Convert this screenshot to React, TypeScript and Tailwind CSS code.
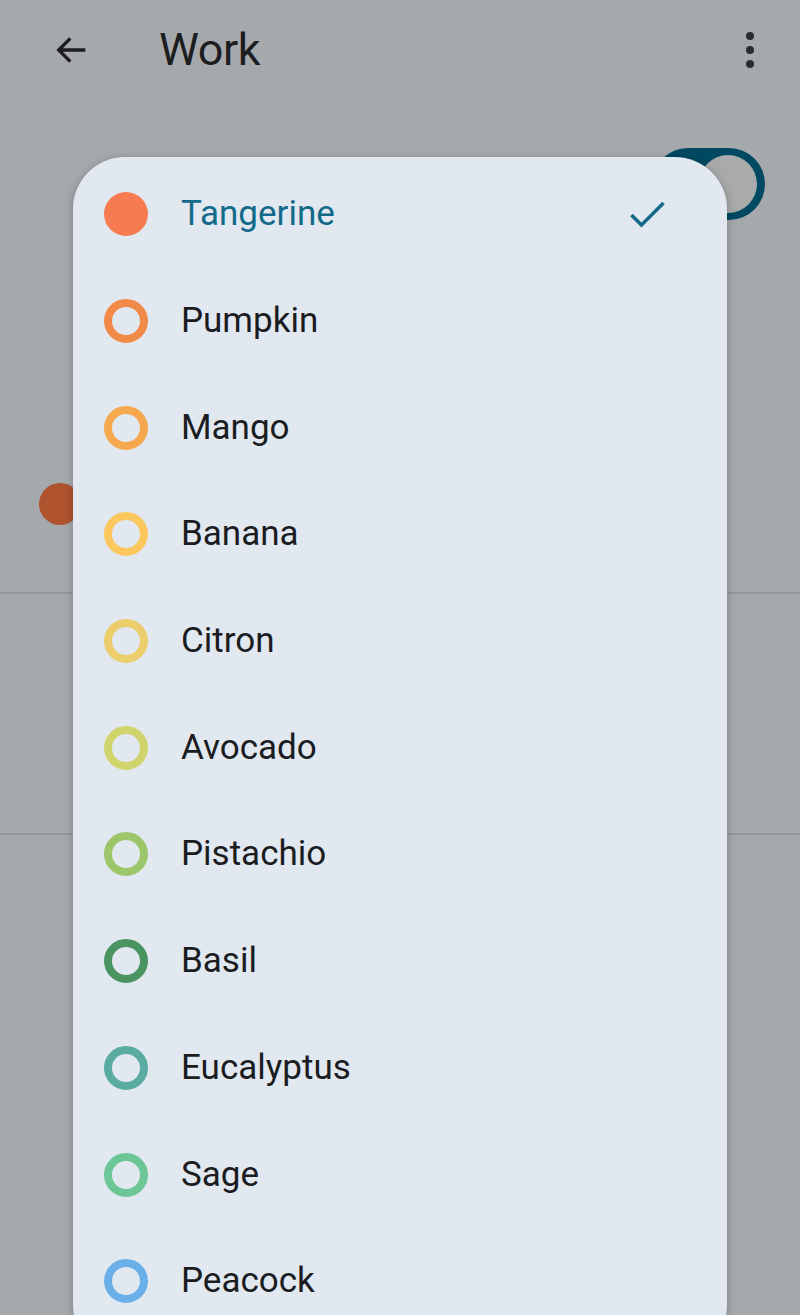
import React from 'react';

const colors = [
  { name: 'Tangerine', color: '#f77b50', selected: true },
  { name: 'Pumpkin', color: '#f28a47' },
  { name: 'Mango', color: '#f6a84e' },
  { name: 'Banana', color: '#fcc85e' },
  { name: 'Citron', color: '#eccd6b' },
  { name: 'Avocado', color: '#d0d46c' },
  { name: 'Pistachio', color: '#9cc66a' },
  { name: 'Basil', color: '#4a9462' },
  { name: 'Eucalyptus', color: '#5aaca2' },
  { name: 'Sage', color: '#6cc695' },
  { name: 'Peacock', color: '#6aafe8' },
];

export default function App() {
  return (
    <div
      className="relative w-[800px] h-[1315px] overflow-hidden bg-[#a6a9ac]"
      style={{ fontFamily: 'Roboto, "Noto Sans", sans-serif' }}
    >
      {/* Top bar */}
      <div className="flex items-center h-[100px] pl-[52px] pr-[46px]">
        <svg width="40" height="40" viewBox="0 0 24 24" className="text-[#1c1c1e]">
          <path d="M20 12H4.5M11 5l-7 7 7 7" fill="none" stroke="currentColor" strokeWidth="2" />
        </svg>
        <span className="ml-[67px] text-[45px] text-[#1c1d1f] tracking-[-0.5px]">Work</span>
        <div className="ml-auto flex flex-col gap-[6px] items-center">
          <span className="w-[8px] h-[8px] rounded-full bg-[#2a2b2d]" />
          <span className="w-[8px] h-[8px] rounded-full bg-[#2a2b2d]" />
          <span className="w-[8px] h-[8px] rounded-full bg-[#2a2b2d]" />
        </div>
      </div>

      {/* Underlying settings (dimmed) */}
      <div className="flex flex-col">
        <div className="flex justify-end pr-[35px] pt-[48px]">
          <div className="w-[113px] h-[72px] rounded-full bg-[#004962] flex items-center justify-end pr-[8px]">
            <span className="w-[58px] h-[58px] rounded-full bg-[#a9aaab]" />
          </div>
        </div>
        <div className="pl-[39px] mt-[263px]">
          <span className="block w-[42px] h-[42px] rounded-full bg-[#b0532f]" />
        </div>
        <div className="h-[2px] bg-[#95989b] mt-[67px]" />
        <div className="h-[2px] bg-[#95989b] mt-[239px]" />
      </div>

      {/* Colour menu */}
      <div className="absolute left-[73px] top-[157px] w-[654px] h-[1200px] rounded-[52px] bg-[#e1e8f0] shadow-[0_2px_10px_rgba(0,0,0,0.25)] pt-[4px]">
        {colors.map(c => (
          <div key={c.name} className="flex items-center h-[106.7px] pl-[31px] pr-[58px]">
            <span
              className="w-[44px] h-[44px] rounded-full shrink-0"
              style={c.selected ? { backgroundColor: c.color } : { border: `8px solid ${c.color}` }}
            />
            <span
              className={`ml-[33px] text-[35px] leading-[40px] ${c.selected ? 'text-[#136a8a]' : 'text-[#1b1c1f]'}`}
            >
              {c.name}
            </span>
            {c.selected && (
              <svg width="44" height="44" viewBox="0 0 24 24" className="ml-auto text-[#136a8a]">
                <path d="M3.5 12.5l5.5 5.5L21 6" fill="none" stroke="currentColor" strokeWidth="1.9" />
              </svg>
            )}
          </div>
        ))}
        <div className="flex items-center h-[106.7px] pl-[31px]">
          <span className="w-[44px] h-[44px] rounded-full shrink-0 border-[8px] border-[#7ab8f0]" />
        </div>
      </div>
    </div>
  );
}
